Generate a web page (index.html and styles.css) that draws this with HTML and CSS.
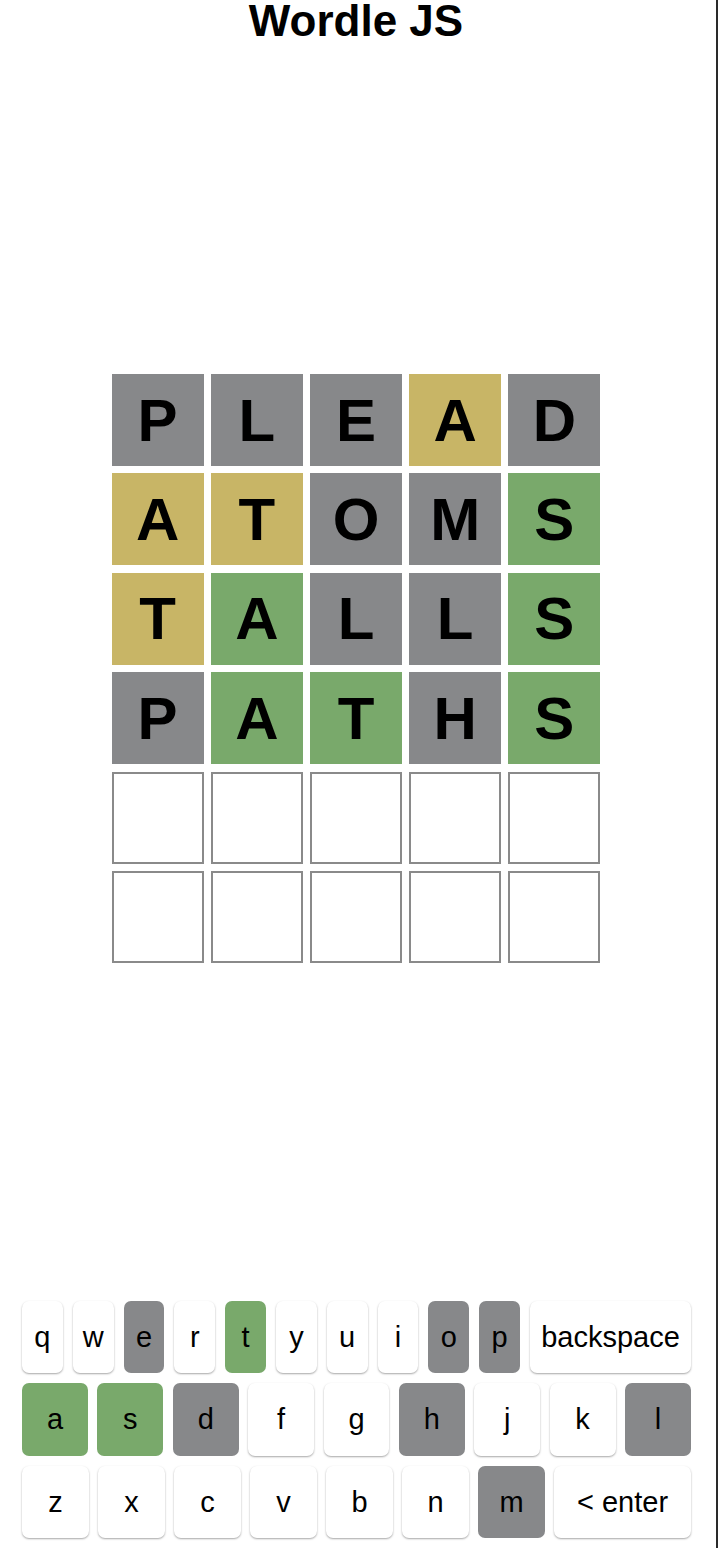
FILE: index.html
```html
<!DOCTYPE html>
<html lang="en">
<head>
<meta charset="utf-8">
<title>Wordle JS</title>
<link rel="stylesheet" href="styles.css">
</head>
<body>
<div class="app">
  <h1 class="title">Wordle JS</h1>
  <div class="board">
    <div class="row">
      <div class="tile absent">P</div><div class="tile absent">L</div><div class="tile absent">E</div><div class="tile present">A</div><div class="tile absent">D</div>
    </div>
    <div class="row">
      <div class="tile present">A</div><div class="tile present">T</div><div class="tile absent">O</div><div class="tile absent">M</div><div class="tile correct">S</div>
    </div>
    <div class="row">
      <div class="tile present">T</div><div class="tile correct">A</div><div class="tile absent">L</div><div class="tile absent">L</div><div class="tile correct">S</div>
    </div>
    <div class="row">
      <div class="tile absent">P</div><div class="tile correct">A</div><div class="tile correct">T</div><div class="tile absent">H</div><div class="tile correct">S</div>
    </div>
    <div class="row">
      <div class="tile empty"></div><div class="tile empty"></div><div class="tile empty"></div><div class="tile empty"></div><div class="tile empty"></div>
    </div>
    <div class="row">
      <div class="tile empty"></div><div class="tile empty"></div><div class="tile empty"></div><div class="tile empty"></div><div class="tile empty"></div>
    </div>
  </div>
  <div class="keyboard">
    <div class="krow krow1">
      <button class="key">q</button><button class="key">w</button><button class="key k-absent">e</button><button class="key">r</button><button class="key k-correct">t</button><button class="key">y</button><button class="key">u</button><button class="key">i</button><button class="key k-absent">o</button><button class="key k-absent">p</button><button class="key wide-back">backspace</button>
    </div>
    <div class="krow krow2">
      <button class="key k-correct">a</button><button class="key k-correct">s</button><button class="key k-absent">d</button><button class="key">f</button><button class="key">g</button><button class="key k-absent">h</button><button class="key">j</button><button class="key">k</button><button class="key k-absent">l</button>
    </div>
    <div class="krow krow3">
      <button class="key">z</button><button class="key">x</button><button class="key">c</button><button class="key">v</button><button class="key">b</button><button class="key">n</button><button class="key k-absent">m</button><button class="key wide-enter">&lt; enter</button>
    </div>
  </div>
</div>
</body>
</html>
```

FILE: styles.css
```css
html {
  background: #2a2a2a;
  margin: 0;
  padding: 0;
}
body {
  margin: 0;
  width: 716px;
  min-height: 1548px;
  background: #ffffff;
  font-family: "Liberation Sans", Arial, Helvetica, sans-serif;
}
.app {
  width: 712px;
  min-height: 1548px;
  display: flex;
  flex-direction: column;
  align-items: center;
}
.title {
  margin: 0;
  font-size: 44px;
  line-height: 42px;
  font-weight: 700;
  color: #000;
  text-align: center;
}
.board {
  margin-top: 332px;
  display: flex;
  flex-direction: column;
  gap: 7.4px;
}
.row {
  display: flex;
  gap: 7.2px;
}
.tile {
  width: 92px;
  height: 92px;
  box-sizing: border-box;
  display: flex;
  align-items: center;
  justify-content: center;
  font-size: 60px;
  font-weight: 700;
  color: #000;
  border: 2px solid transparent;
}
.absent { background: #87888a; border-color: #87888a; }
.present { background: #c8b566; border-color: #c8b566; }
.correct { background: #79a96b; border-color: #79a96b; }
.empty { background: #fff; border-color: #8a8a8a; }

.keyboard {
  margin-top: auto;
  margin-bottom: 10px;
  align-self: flex-start;
  margin-left: 22px;
  width: 669px;
  display: flex;
  flex-direction: column;
  gap: 10px;
}
.krow {
  display: flex;
  height: 72px;
}
.krow1 { gap: 10px; }
.krow2 { gap: 9.4px; height: 73px; }
.krow3 { gap: 9px; }
.key {
  flex: 1 1 0;
  min-width: 0;
  padding: 0;
  margin: 0;
  border: none;
  border-radius: 7px;
  background: #ffffff;
  box-shadow: 0 1px 2px rgba(0, 0, 0, 0.35);
  font-family: "Liberation Sans", Arial, Helvetica, sans-serif;
  font-size: 29px;
  color: #000;
  display: flex;
  align-items: center;
  justify-content: center;
}
.k-absent { background: #87888a; box-shadow: none; }
.k-correct { background: #79a96b; box-shadow: none; }
.wide-back { flex: 0 0 161px; }
.wide-enter { flex: 0 0 137px; }
```
